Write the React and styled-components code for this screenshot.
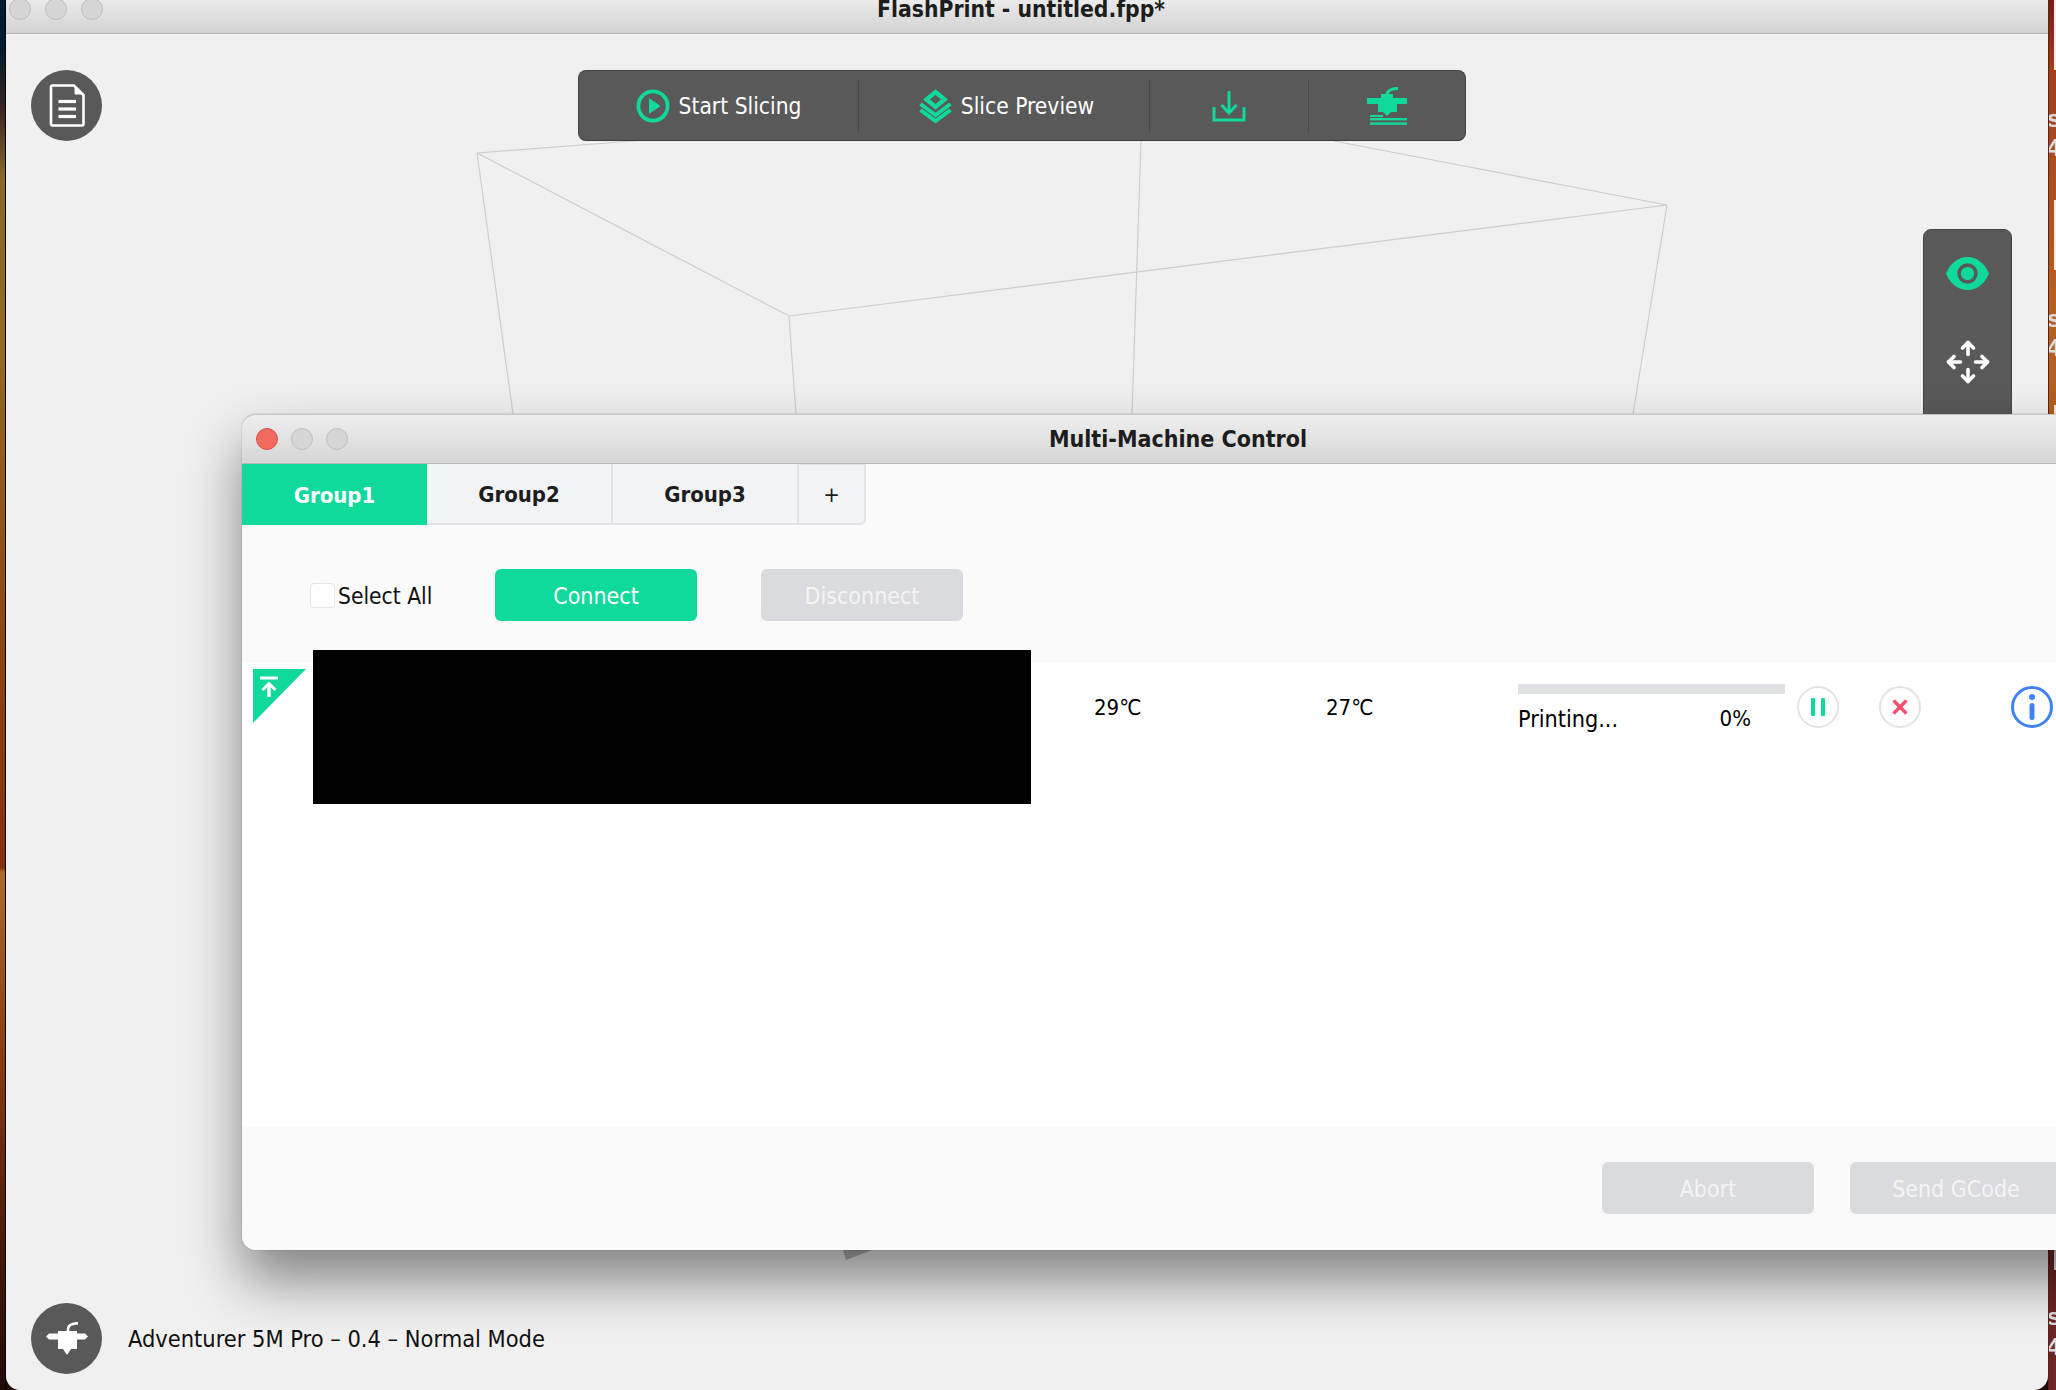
import styled, { createGlobalStyle } from "styled-components";

const GREEN = "#10d99c";
const UI_FONT = `"DejaVu Sans Condensed", "DejaVu Sans", "Liberation Sans", sans-serif`;

const GlobalStyle = createGlobalStyle`
  html, body {
    margin: 0;
    padding: 0;
    overflow: hidden;
  }
  body {
    font-family: ${UI_FONT};
    color: #111;
  }
`;

const Desktop = styled.div`
  position: relative;
  width: 2056px;
  height: 1390px;
  overflow: hidden;
  display: grid;
  grid-template-columns: 6px 1fr 8px;
  background: #200a06;
`;

const LeftEdge = styled.div`
  border-right: 1px solid #050505;
  background: linear-gradient(
    to bottom,
    #021a2c 0,
    #041b2c 50px,
    #3a2624 110px,
    #8a6a2a 180px,
    #93691f 360px,
    #8f4716 620px,
    #862e12 868px,
    #ad6a2a 872px,
    #8a3a14 1060px,
    #4a1a0a 1240px,
    #200a06 1390px
  );
`;

const RightEdge = styled.div`
  position: relative;
  overflow: hidden;
  border-left: 1px solid #5c2410;
  background: linear-gradient(
    to bottom,
    #7a1a14 0,
    #a33e1a 70px,
    #b85f20 300px,
    #b55e20 413px,
    #6e2424 1250px,
    #6e2424 1390px
  );
`;

// desktop file thumbnails and labels peeking out past the window edge
const Thumb = styled.div`
  position: absolute;
  left: 5px;
  top: ${(p) => p.$top}px;
  width: 10px;
  height: ${(p) => p.$height}px;
  background: #efefef;
`;

const IconLabel = styled.span`
  position: absolute;
  left: -2px;
  top: ${(p) => p.$top}px;
  font-family: "Liberation Sans", sans-serif;
  font-size: 24px;
  line-height: 28px;
  font-weight: 700;
  color: #dcdcdc;
  white-space: nowrap;
`;

const MainWindow = styled.div`
  display: flex;
  flex-direction: column;
  min-width: 0;
  height: 1390px;
  border-radius: 0 0 14px 14px;
  overflow: hidden;
  background: #f0f0f0;
`;

const WindowBar = styled.div`
  position: relative;
  flex: none;
  box-sizing: border-box;
  height: 34px;
  padding: 0 0 16px 3px;
  display: flex;
  align-items: center;
  gap: 14px;
  background: linear-gradient(to bottom, #ebebeb, #d2d2d2);
  border-bottom: 1px solid #b6b6b6;
`;

const Light = styled.span`
  flex: none;
  box-sizing: border-box;
  width: 22px;
  height: 22px;
  border-radius: 50%;
  background: ${(p) => (p.$red ? "#f2695d" : "#d6d6d6")};
  border: 1px solid ${(p) => (p.$red ? "#d9524a" : "#bfbfbf")};
`;

const WindowTitle = styled.div`
  position: absolute;
  left: 0;
  right: 12px;
  top: -6px;
  text-align: center;
  font-size: 22.7px;
  line-height: 30px;
  font-weight: 700;
  color: #1d1d1d;
  white-space: nowrap;
`;

const Viewport = styled.div`
  position: relative;
  flex: 1;
  display: flex;
  flex-direction: column;
  min-height: 0;
`;

const Wireframe = styled.svg`
  position: absolute;
  left: 0;
  top: 0;
  width: 2042px;
  height: 1356px;
`;

const TopRow = styled.div`
  position: relative;
  display: flex;
  align-items: flex-start;
  padding: 36px 0 0 25px;
`;

const RoundButton = styled.div`
  flex: none;
  width: 71px;
  height: 71px;
  border-radius: 50%;
  background: #595959;
  display: flex;
  align-items: center;
  justify-content: center;
`;

const Toolbar = styled.div`
  box-sizing: border-box;
  width: 888px;
  height: 71px;
  margin-left: 476px;
  display: flex;
  align-items: center;
  background: #595959;
  border: 1px solid #444;
  border-bottom-color: #3a3a3a;
  border-radius: 8px;
`;

const ToolItem = styled.div`
  flex: none;
  box-sizing: border-box;
  width: ${(p) => p.$width}px;
  padding-left: ${(p) => p.$shift || 0}px;
  display: flex;
  align-items: center;
  justify-content: center;
  gap: 9px;
  font-size: 22.6px;
  line-height: 40px;
  color: #fff;
`;

const ToolSep = styled.span`
  flex: none;
  width: 1px;
  height: 54px;
  background: #4b4b4b;
`;

const SidePanel = styled.div`
  position: absolute;
  left: 1917px;
  top: 195px;
  box-sizing: border-box;
  width: 89px;
  height: 200px;
  padding-top: 27px;
  display: flex;
  flex-direction: column;
  align-items: center;
  gap: 50px;
  background: #595959;
  border: 1px solid #444;
  border-radius: 8px 8px 0 0;
`;

const StatusRow = styled.div`
  position: relative;
  margin-top: auto;
  padding: 0 0 16px 25px;
  display: flex;
  align-items: center;
  gap: 26px;
  font-size: 23.4px;
  color: #111;
`;

const Dialog = styled.div`
  position: absolute;
  left: 242px;
  top: 414px;
  width: 1880px;
  height: 836px;
  display: flex;
  flex-direction: column;
  background: #fafafa;
  border-radius: 14px;
  box-shadow: 0 30px 55px rgba(0, 0, 0, 0.46), 0 0 1px rgba(0, 0, 0, 0.5);
`;

const DialogBar = styled.div`
  position: relative;
  flex: none;
  box-sizing: border-box;
  height: 50px;
  padding-left: 14px;
  display: flex;
  align-items: center;
  gap: 13px;
  background: linear-gradient(to bottom, #eeeeee, #d6d6d6);
  border-top: 1px solid #c4c4c4;
  border-bottom: 1px solid #b8b8b8;
  border-radius: 14px 14px 0 0;
`;

const DialogTitle = styled.div`
  position: absolute;
  left: 0;
  width: 1872px;
  top: 9px;
  text-align: center;
  font-size: 23px;
  line-height: 30px;
  font-weight: 700;
  color: #1d1d1d;
`;

const TabRow = styled.div`
  flex: none;
  display: flex;
  height: 61px;
`;

const Tab = styled.div`
  box-sizing: border-box;
  width: ${(p) => p.$width}px;
  padding-top: 1px;
  display: flex;
  align-items: center;
  justify-content: center;
  font-size: 22px;
  font-weight: 700;
  color: ${(p) => (p.$active ? "#fff" : "#1d1d1d")};
  background: ${(p) => (p.$active ? GREEN : "#f2f3f5")};
  border: ${(p) => (p.$active ? "0" : "2px solid #e1e3e7")};
  border-left: 0;
  border-top: 0;
`;

const AddTab = styled(Tab)`
  font-weight: 400;
  border-radius: 0 0 6px 0;
  border-top: 1px solid #e1e3e7;
`;

const ControlRow = styled.div`
  flex: none;
  display: flex;
  align-items: center;
  gap: 64px;
  margin: 44px 0 42px 68px;
`;

const SelectAll = styled.label`
  width: 121px;
  display: flex;
  align-items: center;
  gap: 3px;
  font-size: 22.6px;
  line-height: 30px;
  white-space: nowrap;
  padding-top: 1px;
`;

const CheckBox = styled.span`
  flex: none;
  box-sizing: border-box;
  width: 25px;
  height: 25px;
  background: #fff;
  border: 1px solid #e2e5ea;
  border-radius: 4px;
`;

const ActionButton = styled.div`
  flex: none;
  width: ${(p) => p.$width || 202}px;
  height: 52px;
  padding-top: 1px;
  box-sizing: border-box;
  display: flex;
  align-items: center;
  justify-content: center;
  border-radius: 6px;
  font-size: 23px;
  color: ${(p) => (p.$primary ? "#fff" : "#f4f4f5")};
  background: ${(p) => (p.$primary ? GREEN : "#dadbde")};
`;

const MachineRow = styled.div`
  flex: none;
  height: 464px;
  display: flex;
  align-items: flex-start;
  background: #fff;
`;

const Corner = styled.svg`
  flex: none;
  margin: 6px 0 0 11px;
`;

// the machine name column is blacked out and sticks up past the row
const Redacted = styled.div`
  flex: none;
  width: 718px;
  height: 154px;
  margin: -13px 0 0 7px;
  background: #000;
`;

const TempCell = styled.div`
  flex: none;
  width: ${(p) => p.$width}px;
  margin-left: ${(p) => p.$offset || 0}px;
  padding-top: 31px;
  font-size: 22px;
  line-height: 28px;
  color: #000;
`;

const ProgressCell = styled.div`
  flex: none;
  width: 267px;
  padding-top: 21px;
`;

const ProgressTrack = styled.div`
  height: 10px;
  background: #e0e1e5;
`;

const ProgressText = styled.div`
  display: flex;
  justify-content: space-between;
  padding: 11px 34px 0 0;
  font-size: 23.2px;
  line-height: 28px;
  color: #000;
`;

const Percent = styled.span`
  font-size: 22px;
`;

const RowIcon = styled.div`
  flex: none;
  box-sizing: border-box;
  width: 42px;
  height: 42px;
  margin: 23px 0 0 ${(p) => p.$offset}px;
  border-radius: 50%;
  border: ${(p) => (p.$info ? "3px solid #3f84f7" : "2px solid #e3e3e3")};
  display: flex;
  align-items: center;
  justify-content: center;
`;

const Footer = styled.div`
  flex: 1;
  display: flex;
  align-items: flex-start;
  gap: 36px;
  padding: 35px 0 0 1360px;
  border-radius: 0 0 0 14px;
  background: #fafafa;
`;

function PlayIcon() {
  return (
    <svg width="34" height="34" viewBox="0 0 34 34">
      <circle cx="17" cy="17" r="14.6" fill="none" stroke={GREEN} strokeWidth="3.8" />
      <path d="M13 9 L24.5 17 L13 25 Z" fill={GREEN} />
    </svg>
  );
}

function LayersIcon() {
  return (
    <svg width="33" height="34" viewBox="0 0 33 34" fill="none" stroke={GREEN}>
      <path d="M16.5 3 L25.5 10.5 L16.5 18 L7.5 10.5 Z" strokeWidth="4.4" />
      <path d="M1.5 15 L16.5 26 L31.5 15" strokeWidth="4" />
      <path d="M1.5 21 L16.5 32 L31.5 21" strokeWidth="4" />
    </svg>
  );
}

function DownloadIcon() {
  return (
    <svg width="34" height="32" viewBox="0 0 34 32" fill="none" stroke={GREEN} strokeWidth="3">
      <path d="M2 17 V30 H32 V17" />
      <path d="M17 1 V22" />
      <path d="M9.5 15 L17 23 L24.5 15" />
    </svg>
  );
}

// extruder head over a stack of printed layers
function PrinterIcon() {
  return (
    <svg width="40" height="38" viewBox="0 0 40 38">
      <path d="M20 12 V8 C20 4 24 1.5 31 1.5" fill="none" stroke={GREEN} strokeWidth="3.2" />
      <path d="M0 11 H14 V7 H26 V11 H40 V17 H30 V25 H24 L20 29 L16 25 H11 V17 H0 Z" fill={GREEN} />
      <rect x="3" y="28" width="13" height="2" fill={GREEN} />
      <rect x="3" y="31" width="37" height="2.4" fill={GREEN} />
      <rect x="3" y="35.4" width="37" height="2.4" fill={GREEN} />
    </svg>
  );
}

function SmallPrinterIcon() {
  return (
    <svg width="42" height="33" viewBox="0 0 42 33">
      <path d="M22 11 V7 C22 3.5 25 1.5 32 1.2" fill="none" stroke="#fff" strokeWidth="2.6" />
      <path d="M0 14.5 L3 11.5 H12 V9 H31 V11.5 H39 L42 14.5 L39 17.5 H31 V27 H25 L21 33 L17 27 H12 V17.5 H3 Z" fill="#fff" />
    </svg>
  );
}

function DocIcon() {
  return (
    <svg width="36" height="43" viewBox="0 0 36 43" fill="none" stroke="#fff" strokeWidth="2.6">
      <path d="M2 3 Q2 1.5 3.5 1.5 H25 L34.5 11 V39.5 Q34.5 41.5 33 41.5 H3.5 Q2 41.5 2 39.5 Z" />
      <path d="M26 2 V10 H34 Z" fill="#fff" strokeWidth="1" />
      <path d="M9.5 17.5 H27" strokeWidth="3.2" />
      <path d="M9.5 25 H27" strokeWidth="3.2" />
      <path d="M9.5 32.5 H27" strokeWidth="3.2" />
    </svg>
  );
}

function EyeIcon() {
  return (
    <svg width="43" height="33" viewBox="0 0 43 33">
      <path d="M0 16.5 C9 -5.5 34 -5.5 43 16.5 C34 38.5 9 38.5 0 16.5 Z" fill={GREEN} />
      <circle cx="21.5" cy="16.5" r="8.4" fill="none" stroke="#595959" strokeWidth="3.6" />
    </svg>
  );
}

function MoveIcon() {
  return (
    <svg width="44" height="44" viewBox="0 0 44 44" fill="none" stroke="#fff" strokeWidth="3.6" strokeLinecap="round" strokeLinejoin="round">
      <path d="M22 2.5 V14.5" />
      <path d="M16.5 8 L22 2.5 L27.5 8" />
      <path d="M22 29.5 V41.5" />
      <path d="M16.5 36 L22 41.5 L27.5 36" />
      <path d="M2.5 22 H14.5" />
      <path d="M8 16.5 L2.5 22 L8 27.5" />
      <path d="M29.5 22 H41.5" />
      <path d="M36 16.5 L41.5 22 L36 27.5" />
    </svg>
  );
}

function CornerBadge() {
  return (
    <Corner width="53" height="54" viewBox="0 0 53 54">
      <path d="M0 0 H53 L0 54 Z" fill={GREEN} />
      <path d="M7 9 H25" stroke="#fff" strokeWidth="3" fill="none" />
      <path d="M16 28 V15" stroke="#fff" strokeWidth="3.4" fill="none" />
      <path d="M9.5 21 L16 14.5 L22.5 21" stroke="#fff" strokeWidth="3" fill="none" />
    </Corner>
  );
}

export default function App() {
  return (
    <Desktop>
      <GlobalStyle />
      <LeftEdge />
      <MainWindow>
        <WindowBar>
          <Light />
          <Light />
          <Light />
          <WindowTitle>FlashPrint - untitled.fpp*</WindowTitle>
        </WindowBar>
        <Viewport>
          {/* print volume outline, drawn in viewport coordinates */}
          <Wireframe viewBox="0 0 2042 1356" fill="none" stroke="#cdcdcd" strokeWidth="1.2">
            <path d="M471 119 L640 106" />
            <path d="M471 119 L783 282 L1661 171 L1328 107" />
            <path d="M471 119 L507 380" />
            <path d="M783 282 L790 380" />
            <path d="M1661 171 L1627 380" />
            <path d="M1135 107 L1126 380" />
            <path d="M837 1216 L866 1216 L840 1226 Z" fill="#b4b4b4" stroke="none" />
          </Wireframe>
          <TopRow>
            <RoundButton>
              <DocIcon />
            </RoundButton>
            <Toolbar>
              <ToolItem $width={279}>
                <PlayIcon />
                Start Slicing
              </ToolItem>
              <ToolSep />
              <ToolItem $width={290} $shift={5}>
                <LayersIcon />
                Slice Preview
              </ToolItem>
              <ToolSep />
              <ToolItem $width={158}>
                <DownloadIcon />
              </ToolItem>
              <ToolSep />
              <ToolItem $width={156}>
                <PrinterIcon />
              </ToolItem>
            </Toolbar>
          </TopRow>
          <SidePanel>
            <EyeIcon />
            <MoveIcon />
          </SidePanel>
          <StatusRow>
            <RoundButton>
              <SmallPrinterIcon />
            </RoundButton>
            Adventurer 5M Pro – 0.4 – Normal Mode
          </StatusRow>
        </Viewport>
      </MainWindow>
      <RightEdge>
        <Thumb $top={-4} $height={74} />
        <IconLabel $top={105}>s</IconLabel>
        <IconLabel $top={134}>4</IconLabel>
        <Thumb $top={200} $height={70} />
        <IconLabel $top={305}>s</IconLabel>
        <IconLabel $top={334}>4</IconLabel>
        <Thumb $top={405} $height={20} />
        <Thumb $top={1240} $height={30} />
        <IconLabel $top={1303}>s</IconLabel>
        <IconLabel $top={1333}>4</IconLabel>
      </RightEdge>

      <Dialog>
        <DialogBar>
          <Light $red />
          <Light />
          <Light />
          <DialogTitle>Multi-Machine Control</DialogTitle>
        </DialogBar>
        <TabRow>
          <Tab $width={185} $active>Group1</Tab>
          <Tab $width={186}>Group2</Tab>
          <Tab $width={186}>Group3</Tab>
          <AddTab $width={67}>+</AddTab>
        </TabRow>
        <ControlRow>
          <SelectAll>
            <CheckBox />
            Select All
          </SelectAll>
          <ActionButton $primary>Connect</ActionButton>
          <ActionButton>Disconnect</ActionButton>
        </ControlRow>
        <MachineRow>
          <CornerBadge />
          <Redacted />
          <TempCell $offset={63} $width={232}>29℃</TempCell>
          <TempCell $width={192}>27℃</TempCell>
          <ProgressCell>
            <ProgressTrack />
            <ProgressText>
              <span>Printing...</span>
              <Percent>0%</Percent>
            </ProgressText>
          </ProgressCell>
          <RowIcon $offset={12}>
            <svg width="16" height="18" viewBox="0 0 16 18" fill={GREEN}>
              <rect x="1" y="0" width="4" height="18" rx="1" />
              <rect x="11" y="0" width="4" height="18" rx="1" />
            </svg>
          </RowIcon>
          <RowIcon $offset={40}>
            <svg width="16" height="16" viewBox="0 0 16 16" stroke="#fb4f6d" strokeWidth="3.4" fill="none">
              <path d="M1.5 1.5 L14.5 14.5" />
              <path d="M14.5 1.5 L1.5 14.5" />
            </svg>
          </RowIcon>
          <RowIcon $offset={90} $info>
            <svg width="6" height="26" viewBox="0 0 6 26" fill="#3f84f7">
              <circle cx="3" cy="3" r="3" />
              <rect x="0.5" y="9" width="5" height="17" rx="2.5" />
            </svg>
          </RowIcon>
        </MachineRow>
        <Footer>
          <ActionButton $width={212}>Abort</ActionButton>
          <ActionButton $width={212}>Send GCode</ActionButton>
        </Footer>
      </Dialog>
    </Desktop>
  );
}
